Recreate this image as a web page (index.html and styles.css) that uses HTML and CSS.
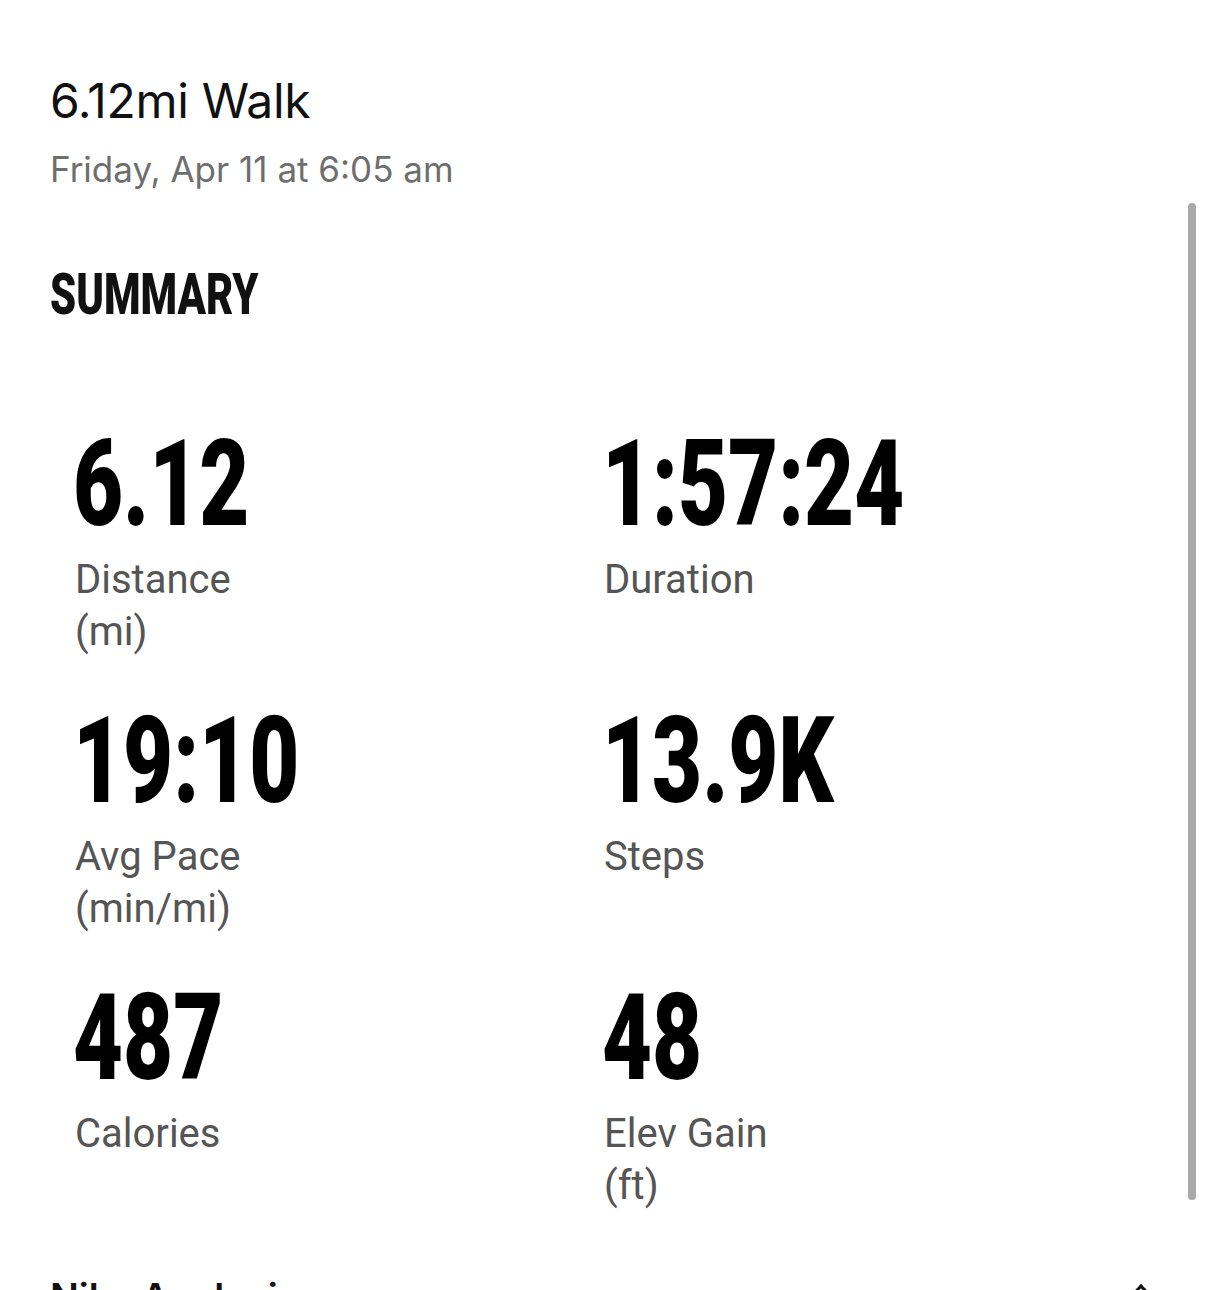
FILE: index.html
```html
<!DOCTYPE html>
<html lang="en">
<head>
    <meta charset="UTF-8">
    <meta name="viewport" content="width=device-width, initial-scale=1.0">
    <title>6.12mi Walk</title>
    <link rel="stylesheet" href="styles.css">
</head>
<body>
    <div class="page">
        <div class="header">
            <h1>6.12mi Walk</h1>
            <p class="date">Friday, Apr 11 at 6:05 am</p>
        </div>

        <h2 class="section-title">SUMMARY</h2>

        <div class="stats">
            <div class="stat">
                <div class="value">6.12</div>
                <div class="label">Distance<br>(mi)</div>
            </div>
            <div class="stat">
                <div class="value">1:57:24</div>
                <div class="label">Duration</div>
            </div>
            <div class="stat">
                <div class="value">19:10</div>
                <div class="label">Avg Pace<br>(min/mi)</div>
            </div>
            <div class="stat">
                <div class="value">13.9K</div>
                <div class="label">Steps</div>
            </div>
            <div class="stat">
                <div class="value">487</div>
                <div class="label">Calories</div>
            </div>
            <div class="stat">
                <div class="value">48</div>
                <div class="label">Elev Gain<br>(ft)</div>
            </div>
        </div>

        <div class="next-section">
            <h3>Nike Analysis</h3>
            <span class="chevron"></span>
        </div>
    </div>
    <div class="scrollbar"></div>
</body>
</html>
```

FILE: styles.css
```css
* {
    padding: 0;
    margin: 0;
    box-sizing: border-box;
}

body {
    background: white;
    height: 1290px;
    overflow: hidden;
    position: relative;
}

.page {
    padding: 72px 0 0 50px;
}

.header h1 {
    font-family: 'Inter', sans-serif;
    font-weight: 400;
    font-size: 48px;
    line-height: 58px;
    color: #111;
    letter-spacing: -0.3px;
}

.date {
    font-family: 'Inter', sans-serif;
    font-size: 35px;
    line-height: 42px;
    color: #6e6e6e;
    margin-top: 18px;
}

.section-title {
    font-family: 'Roboto', sans-serif;
    font-weight: 900;
    font-size: 58px;
    line-height: 60px;
    color: #111;
    margin-top: 74px;
    transform: scaleX(0.72);
    transform-origin: left;
}

.stats {
    display: grid;
    grid-template-columns: 529px 1fr;
    row-gap: 43px;
    padding-left: 23px;
    margin-top: 100px;
}

.value {
    font-family: 'Roboto', sans-serif;
    font-weight: 900;
    font-size: 120px;
    line-height: 120px;
    color: #000;
    transform: scaleX(0.72);
    transform-origin: left;
    height: 120px;
}

.label {
    font-family: 'Roboto', sans-serif;
    font-size: 40px;
    line-height: 52px;
    color: #555;
    height: 104px;
    margin-top: 10px;
    padding-left: 2px;
}

.next-section {
    display: flex;
    justify-content: space-between;
    margin-top: 65px;
    padding-right: 58px;
}

.next-section h3 {
    font-family: 'Inter', sans-serif;
    font-weight: 600;
    font-size: 38px;
    line-height: 40px;
    color: #111;
}

.chevron {
    width: 14px;
    height: 14px;
    border-left: 3px solid #111;
    border-top: 3px solid #111;
    transform: rotate(45deg);
    margin-top: 10px;
}

.scrollbar {
    position: absolute;
    top: 203px;
    left: 1188px;
    width: 8px;
    height: 997px;
    border-radius: 4px;
    background: #a8a8a8;
}
```
